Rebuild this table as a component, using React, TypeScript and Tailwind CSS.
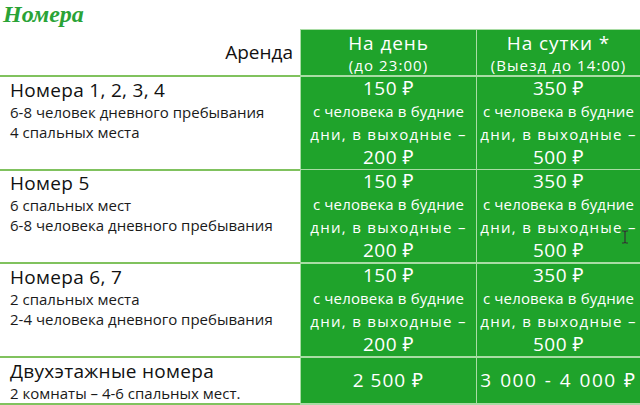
import React from "react";

const G = "bg-[#1fa32b]";

function Price({ a, b, c }: { a: string; b?: string; c?: string }) {
  return (
    <div className="flex flex-col items-center text-white leading-[23px]">
      <div className="text-[19px] tracking-[0.5px]">{a}</div>
      {b && <div className="text-[15px] tracking-[0.15px]">с человека в будние</div>}
      {b && <div className="text-[15px] tracking-[1.3px]">{b}</div>}
      {c && <div className="text-[19px] tracking-[0.5px]">{c}</div>}
    </div>
  );
}

function Row({
  h,
  title,
  l1,
  l2,
  p1,
  p2,
}: {
  h: string;
  title: string;
  l1: string;
  l2: string;
  p1: [string, string];
  p2: [string, string];
}) {
  return (
    <div className={`grid grid-cols-[300px_176px_1fr] ${h}`}>
      <div className="border-b-2 border-[#80c25e] pl-[10px] pt-[1px]">
        <div className="text-[19px] leading-[24px] tracking-[0.3px] text-[#111]">{title}</div>
        <div className="text-[15px] leading-[20px] text-[#1a1a1a]">{l1}</div>
        <div className="text-[15px] leading-[20px] text-[#1a1a1a]">{l2}</div>
      </div>
      <div className={`${G} border-l border-b-2 border-[#a9dca5]`}>
        <Price a={p1[0]} b="дни, в выходные –" c={p1[1]} />
      </div>
      <div className={`${G} border-l border-b-2 border-[#a9dca5]`}>
        <Price a={p2[0]} b="дни, в выходные –" c={p2[1]} />
      </div>
    </div>
  );
}

export default function App() {
  return (
    <div
      className="relative w-[640px] h-[405px] overflow-hidden bg-white"
      style={{ fontFamily: '"Open Sans", "Noto Sans", sans-serif' }}
    >
      <div
        className="h-[29px] pl-[3px] pt-[1px] text-[24px] leading-[26px] font-bold italic text-[#2aa336]"
        style={{ fontFamily: '"Liberation Serif", serif' }}
      >
        Номера
      </div>
      <div className="grid grid-cols-[300px_176px_1fr] h-[48px]">
        <div className="border-b-2 border-[#80c25e] flex items-center justify-end pr-[7px] text-[19px] text-[#111]">
          Аренда
        </div>
        <div className={`${G} border-l border-t border-b-2 border-[#a9dca5] flex flex-col items-center pt-[2px] text-white`}>
          <div className="text-[19px] leading-[23px] tracking-[0.9px]">На день</div>
          <div className="text-[15px] leading-[20px] tracking-[1.1px]">(до 23:00)</div>
        </div>
        <div className={`${G} border-l border-t border-b-2 border-[#a9dca5] flex flex-col items-center pt-[2px] text-white`}>
          <div className="text-[19px] leading-[23px] tracking-[0.9px]">На сутки *</div>
          <div className="text-[15px] leading-[20px] tracking-[1.1px]">(Выезд до 14:00)</div>
        </div>
      </div>
      <Row
        h="h-[93px]"
        title="Номера 1, 2, 3, 4"
        l1="6-8 человек дневного пребывания"
        l2="4 спальных места"
        p1={["150 ₽", "200 ₽"]}
        p2={["350 ₽", "500 ₽"]}
      />
      <Row
        h="h-[94px]"
        title="Номер 5"
        l1="6 спальных мест"
        l2="6-8 человека дневного пребывания"
        p1={["150 ₽", "200 ₽"]}
        p2={["350 ₽", "500 ₽"]}
      />
      <Row
        h="h-[94px]"
        title="Номера 6, 7"
        l1="2 спальных места"
        l2="2-4 человека дневного пребывания"
        p1={["150 ₽", "200 ₽"]}
        p2={["350 ₽", "500 ₽"]}
      />
      <div className="grid grid-cols-[300px_176px_1fr] h-[47px]">
        <div className="border-b-[3px] border-[#80c25e] pl-[10px] pt-[1px]">
          <div className="text-[19px] leading-[24px] tracking-[0.3px] text-[#111]">Двухэтажные номера</div>
          <div className="text-[15px] leading-[20px] text-[#1a1a1a]">2 комнаты – 4-6 спальных мест.</div>
        </div>
        <div className={`${G} border-l border-b-[3px] border-[#a9dca5] flex items-center justify-center text-white text-[19px] tracking-[1px]`}>
          2 500 ₽
        </div>
        <div className={`${G} border-l border-b-[3px] border-[#a9dca5] flex items-center justify-center text-white text-[19px] tracking-[1.5px] [word-spacing:1px]`}>
          3 000 - 4 000 ₽
        </div>
      </div>
      <svg className="absolute left-[621px] top-[230px]" width="8" height="14" viewBox="0 0 8 14">
        <path d="M1 1h2l1 1 1-1h2M4 2v10M1 13h2l1-1 1 1h2" stroke="#333" strokeWidth="1.2" fill="none" />
      </svg>
    </div>
  );
}
